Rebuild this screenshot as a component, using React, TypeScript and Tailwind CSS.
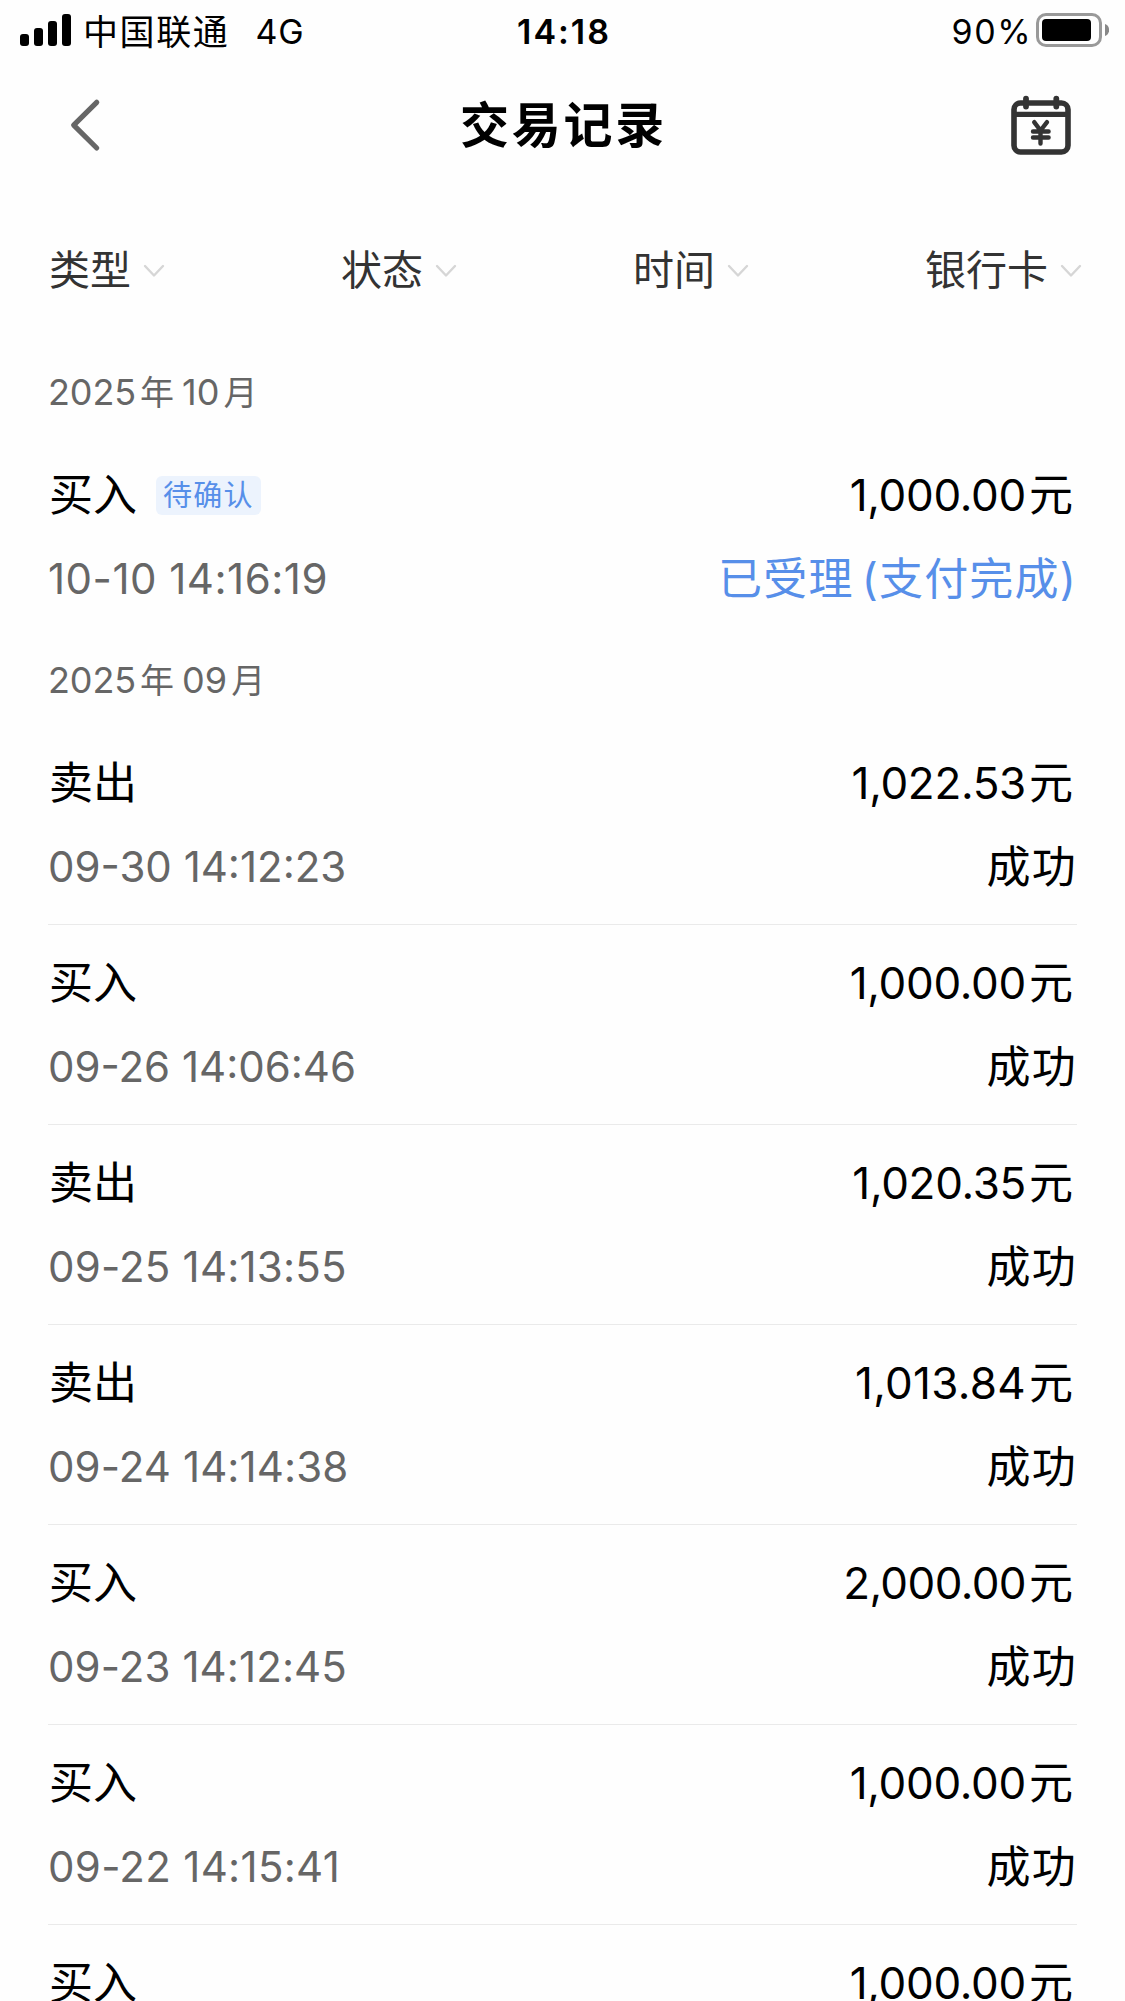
import { Fragment } from 'react';

type Trade = {
  kind: string;
  time?: string;
  timeClass?: string;
  amount: string;
  amountClass?: string;
  pending?: boolean;
};

const groups: { year: string; month: string; trades: Trade[] }[] = [
  {
    year: '2025',
    month: '10',
    trades: [
      { kind: '买入', time: '10-10 14:16:19', timeClass: 'tracking-[0.5px]', amount: '1,000.00', pending: true },
    ],
  },
  {
    year: '2025',
    month: '09',
    trades: [
      { kind: '卖出', time: '09-30 14:12:23', amount: '1,022.53' },
      { kind: '买入', time: '09-26 14:06:46', amount: '1,000.00' },
      { kind: '卖出', time: '09-25 14:13:55', timeClass: 'tracking-[0.2px]', amount: '1,020.35' },
      { kind: '卖出', time: '09-24 14:14:38', timeClass: 'tracking-[0.1px]', amount: '1,013.84', amountClass: 'tracking-[0.3px]' },
      { kind: '买入', time: '09-23 14:12:45', timeClass: 'tracking-[0.1px]', amount: '2,000.00', amountClass: 'tracking-[-0.6px]' },
      { kind: '买入', time: '09-22 14:15:41', timeClass: 'tracking-[0.3px]', amount: '1,000.00' },
      { kind: '买入', amount: '1,000.00' },
    ],
  },
];

const filters = ['类型', '状态', '时间', '银行卡'];

function StatusBar() {
  return (
    <div className="flex h-[62px] shrink-0 items-center pl-5 pr-4 text-[34px] leading-[62px] text-black">
      <div className="flex flex-1 items-center">
        <div className="-mt-[2px] flex h-8 items-end gap-[5px]">
          <i className="h-3 w-[9px] rounded-[3px] bg-black" />
          <i className="h-[18px] w-[9px] rounded-[3px] bg-black" />
          <i className="h-[25px] w-[9px] rounded-[3px] bg-black" />
          <i className="h-8 w-[9px] rounded-[3px] bg-black" />
        </div>
        <span className="ml-3 pt-[2px] text-[35px] tracking-[1.6px]">中国联通</span>
        <span className="ml-[26px] pt-[2px] tracking-[1px]">4G</span>
      </div>
      <div className="pr-px pt-[2px] font-semibold tracking-[2px]">14:18</div>
      <div className="flex flex-1 items-center justify-end">
        <span className="mr-[4px] pt-[2px] tracking-[1.5px]">90%</span>
        <svg className="-mt-[2px] h-[34px] w-[73px]" viewBox="0 0 73 34" fill="none">
          <rect x="1.5" y="1.5" width="63" height="31" rx="8.5" stroke="#999" strokeWidth="3" />
          <rect x="6" y="6" width="49" height="22" rx="4" fill="#000" />
          <path d="M69 11 C74.5 12.5 74.5 21.5 69 23 Z" fill="#888" />
        </svg>
      </div>
    </div>
  );
}

function Header() {
  return (
    <div className="flex h-[124px] shrink-0 items-center justify-between pl-[60px] pr-[50px]">
      <svg className="mt-px h-[60px] w-[60px]" viewBox="0 0 60 60" fill="none">
        <path d="M36.7 7.3 L13.7 30.2 L36.7 53" stroke="#666" strokeWidth="5.2" strokeLinecap="round" strokeLinejoin="round" />
      </svg>
      <h1 className="ml-[2px] pt-[3px] text-[49px] font-bold leading-[124px] tracking-[2.8px] text-black">交易记录</h1>
      <svg className="mt-[2px] h-[70px] w-[70px]" viewBox="0 0 70 70" fill="none" stroke="#333">
        <rect x="9" y="13" width="54" height="49" rx="6.5" strokeWidth="5.6" />
        <path d="M9 24.3H63" strokeWidth="5.2" />
        <path d="M21 8.6V16.6M51.3 8.6V16.6" strokeWidth="5.8" strokeLinecap="round" />
        <path d="M29.2 32.2L35.5 40.5L42 32.2M35.5 40.5V53.6M28 41.5H43.6M28 47.5H43.6" strokeWidth="4.4" strokeLinecap="round" strokeLinejoin="round" />
      </svg>
    </div>
  );
}

function FilterBar() {
  return (
    <div className="flex h-[162px] shrink-0 items-center justify-between pl-[49px] pr-[43px] pt-[5px]">
      {filters.map((f) => (
        <div key={f} className="flex items-center text-[41px] leading-[60px] text-[#333]">
          {f}
          <svg className="ml-[12px] mt-[3px] h-[14px] w-[22px]" viewBox="0 0 22 14" fill="none">
            <path d="M2 2L11 11.5L20 2" stroke="#d6d6d6" strokeWidth="2.4" strokeLinecap="round" strokeLinejoin="round" />
          </svg>
        </div>
      ))}
    </div>
  );
}

function MonthTitle({ year, month }: { year: string; month: string }) {
  return (
    <div className="flex h-[88px] shrink-0 items-center pl-12 text-[36px] leading-[88px] text-[#666]">
      <span className="tracking-[-0.1px]">{year}</span>
      <span className="ml-[4px] pt-[2px] text-[34px]">年</span>
      <span className="ml-[8px]">{month}</span>
      <span className="ml-[4px] pt-[2px] text-[34px]">月</span>
    </div>
  );
}

function TradeRow({ trade, divided }: { trade: Trade; divided: boolean }) {
  return (
    <div
      className={`mx-12 flex h-[200px] shrink-0 flex-col gap-6 leading-[60px] ${
        divided ? 'border-t border-[#eaeaea] pt-7' : 'pt-[29px]'
      }`}
    >
      <div className="flex h-[60px] items-center justify-between pl-px text-[44px] text-black">
        <div className="flex items-center">
          {trade.kind}
          {trade.pending && (
            <span className="ml-[19px] flex h-[39px] items-center rounded-[6px] bg-[#ecf3fd] pl-[7px] pr-[7px] text-[29px] leading-[41px] tracking-[1.3px] text-[#578fe9]">
              待确认
            </span>
          )}
        </div>
        <div className="flex pr-[4px]">
          <span className={trade.amountClass ?? 'tracking-[-0.3px]'}>{trade.amount}</span>
          <span className="ml-[3px]">元</span>
        </div>
      </div>
      {trade.time && (
        <div className="flex h-[60px] items-center justify-between">
          <span className={`text-[42px] text-[#666] ${trade.timeClass ?? 'tracking-normal'}`}>{trade.time}</span>
          {trade.pending ? (
            <span className="flex text-[44px] tracking-[1.2px] text-[#578fe9]">
              <span>已受理</span>
              <span className="ml-[8px]">(支付完成)</span>
            </span>
          ) : (
            <span className="text-[44px] tracking-[1.2px] text-black">成功</span>
          )}
        </div>
      )}
    </div>
  );
}

export default function App() {
  return (
    <div className="flex h-[2001px] w-[1125px] flex-col overflow-hidden bg-[#fefefe] font-['Inter','Noto_Sans_CJK_SC',sans-serif]">
      <StatusBar />
      <Header />
      <FilterBar />
      {groups.map((g) => (
        <Fragment key={g.month}>
          <MonthTitle year={g.year} month={g.month} />
          {g.trades.map((t, i) => (
            <TradeRow key={i} trade={t} divided={i > 0} />
          ))}
        </Fragment>
      ))}
    </div>
  );
}
